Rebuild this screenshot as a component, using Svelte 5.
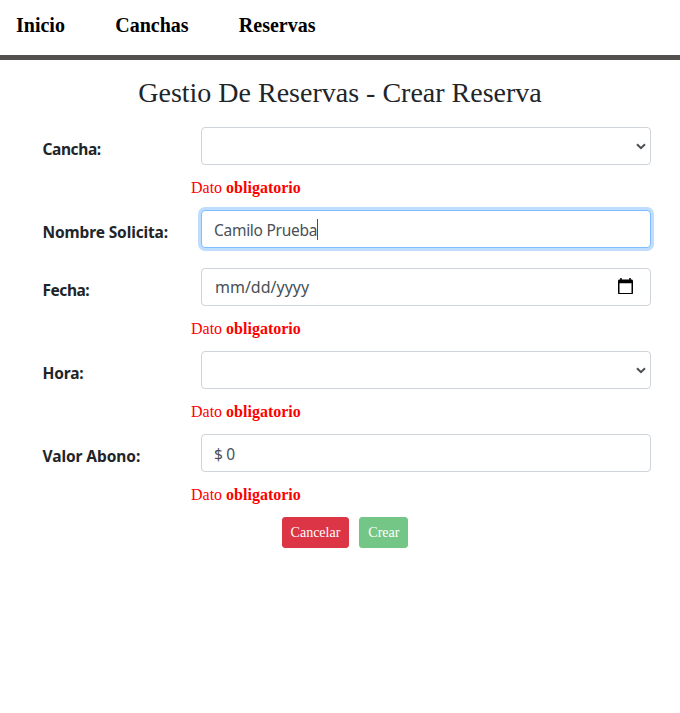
<script>
  const links = ['Inicio', 'Canchas', 'Reservas'];
  const fields = [
    { id: 'cancha', label: 'Cancha:', type: 'select', error: true, spacing: -0.4 },
    { id: 'nombre', label: 'Nombre Solicita:', type: 'text', value: 'Camilo Prueba', focused: true, spacing: -0.13 },
    { id: 'fecha', label: 'Fecha:', type: 'date', error: true, spacing: -0.45 },
    { id: 'hora', label: 'Hora:', type: 'select', error: true, spacing: -0.15 },
    { id: 'valor', label: 'Valor Abono:', type: 'text', value: '$ 0', error: true, spacing: -0.08 }
  ];
</script>

<header>
  <nav>
    {#each links as link}
      <a href="#{link.toLowerCase()}">{link}</a>
    {/each}
  </nav>
</header>

<main>
  <h3>Gestio De Reservas - Crear Reserva</h3>
  <form>
    {#each fields as field (field.id)}
      <div class="group">
        <div class="row">
          <span class="label"><span style="letter-spacing: {field.spacing}px">{field.label}</span></span>
          {#if field.type === 'select'}
            <div class="control select">
              <svg width="10" height="7" viewBox="0 0 10 7">
                <path d="M1 1.2 5 5.2 9 1.2" fill="none" stroke="#495057" stroke-width="2" />
              </svg>
            </div>
          {:else if field.type === 'date'}
            <div class="control date">
              <span class="placeholder">mm/dd/yyyy</span>
              <svg width="15" height="16.5" viewBox="2 1 20 22">
                <path fill="#000" d="M20 3h-1V1h-2v2H7V1H5v2H4c-1.1 0-2 .9-2 2v16c0 1.1.9 2 2 2h16c1.1 0 2-.9 2-2V5c0-1.1-.9-2-2-2zm0 18H4V8h16v13z" />
              </svg>
            </div>
          {:else}
            <div class="control text" class:focused={field.focused}>
              <span class="value">{field.value}</span>
              {#if field.focused}<i class="caret"></i>{/if}
            </div>
          {/if}
        </div>
        {#if field.error}
          <div class="error">Dato <strong>obligatorio</strong></div>
        {/if}
      </div>
    {/each}
    <div class="actions">
      <button type="button" class="cancel">Cancelar</button>
      <button type="button" class="create">Crear</button>
    </div>
  </form>
</main>

<style>
  :global(body) {
    margin: 0;
    background: #fff;
    font-family: "Liberation Serif", serif;
    color: #212529;
  }
  header {
    box-sizing: border-box;
    height: 60px;
    border-bottom: 5px solid #53504f;
    padding: 10px 16px 0;
  }
  nav {
    display: flex;
    gap: 50.3px;
  }
  a {
    color: #000;
    font-size: 20px;
    line-height: 30px;
    font-weight: 700;
    text-decoration: none;
  }
  h3 {
    margin: 0;
    padding-top: 16px;
    height: 51px;
    font-size: 28px;
    line-height: 34px;
    font-weight: 400;
    text-align: center;
  }
  .group {
    height: 83px;
  }
  .group:nth-child(2) {
    height: 58px;
  }
  .row {
    display: flex;
    height: 38px;
    padding: 0 29px 0 42.5px;
  }
  .label {
    flex: 1;
    padding-top: 10px;
    font: 700 15.5px/24px "Noto Sans", sans-serif;
    white-space: nowrap;
  }
  .control {
    box-sizing: border-box;
    display: flex;
    align-items: center;
    width: 450px;
    height: 38px;
    padding: 6px 12px;
    border: 1px solid #ced4da;
    border-radius: 4px;
    background: #fff;
    color: #495057;
    font: 400 16px/24px "Noto Sans", sans-serif;
  }
  .text {
    padding-top: 8px;
    font-size: 15.5px;
  }
  .value {
    letter-spacing: -0.28px;
    white-space: pre;
  }
  .focused {
    border-color: #80bdff;
    box-shadow: 0 0 0 3px #bfdeff;
  }
  .caret {
    width: 1px;
    height: 21px;
    margin-top: -1px;
    background: #495057;
  }
  .select {
    justify-content: flex-end;
    padding-right: 4px;
  }
  .date {
    justify-content: space-between;
    padding-right: 17px;
  }
  .date svg {
    margin-bottom: 2px;
  }
  .placeholder {
    padding-left: 1px;
  }
  .error {
    padding: 11px 0 0 191px;
    font-size: 16px;
    line-height: 24px;
    color: #f00;
  }
  .actions {
    display: flex;
    justify-content: center;
    gap: 10px;
    padding-left: 10px;
  }
  button {
    box-sizing: border-box;
    height: 31px;
    padding: 4px 8px;
    border: 1px solid #dc3545;
    border-radius: 3px;
    background: #dc3545;
    color: #fff;
    font: 400 14px/21px "Liberation Serif", serif;
  }
  .create {
    background: #74c686;
    border-color: #74c686;
  }
</style>
